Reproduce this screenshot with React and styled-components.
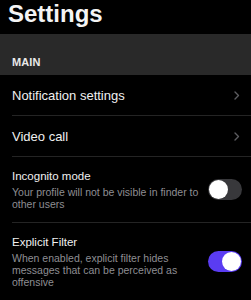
import React from 'react';
import styled, { createGlobalStyle } from 'styled-components';

const GlobalStyle = createGlobalStyle`
  html, body {
    margin: 0;
    padding: 0;
    background: #000;
  }
  body {
    font-family: 'Liberation Sans', Arial, sans-serif;
    color: #fff;
    -webkit-font-smoothing: antialiased;
  }
`;

const Screen = styled.div`
  width: 251px;
  height: 300px;
  overflow: hidden;
  background: #000;
`;

const Header = styled.h1`
  margin: 0;
  height: 34px;
  box-sizing: border-box;
  padding: 0 0 6px 8px;
  display: flex;
  align-items: flex-end;
  font-size: 24px;
  line-height: 28px;
  font-weight: 700;
  color: #f4f4f4;
`;

const Section = styled.div`
  height: 41px;
  box-sizing: border-box;
  background: #292929;
  padding: 22px 12px 0;
  font-size: 11px;
  line-height: 13px;
  font-weight: 700;
  color: #e8e8e8;
  letter-spacing: 0.1px;
`;

const List = styled.div`
  display: flex;
  flex-direction: column;
  padding-left: 12px;
`;

const NavRow = styled.div`
  height: 41px;
  box-sizing: border-box;
  padding: 1px 11px 0 0;
  display: flex;
  align-items: center;
  justify-content: space-between;
  border-bottom: 1px solid #242424;
  font-size: 13px;
  color: #f0f0f0;
`;

const ToggleRow = styled.div`
  box-sizing: border-box;
  padding: 12px 9px 12px 0;
  display: flex;
  align-items: center;
  justify-content: space-between;
  border-bottom: ${(p) => (p.$last ? 'none' : '1px solid #242424')};
`;

const TextCol = styled.div`
  width: 192px;
  display: flex;
  flex-direction: column;
`;

const Title = styled.div`
  font-size: 11.5px;
  line-height: 14px;
  color: #f0f0f0;
`;

const Sub = styled.div`
  margin-top: 4px;
  font-size: 10.5px;
  line-height: 11.7px;
  color: #8e8e93;
`;

const Track = styled.div`
  width: 34px;
  height: 21px;
  border-radius: 11px;
  box-sizing: border-box;
  padding: 1px;
  display: flex;
  justify-content: ${(p) => (p.$on ? 'flex-end' : 'flex-start')};
  background: ${(p) => (p.$on ? '#5a3cf2' : '#38383b')};
  flex-shrink: 0;
`;

const Knob = styled.div`
  width: 19px;
  height: 19px;
  border-radius: 50%;
  background: #fff;
`;

const Chevron = () => (
  <svg width="6" height="9" viewBox="0 0 6 9">
    <polyline points="1,1 4.5,4.5 1,8" fill="none" stroke="#5c5c60" strokeWidth="1.4" strokeLinecap="round" strokeLinejoin="round" />
  </svg>
);

const Toggle = ({ on }) => (
  <Track $on={on}>
    <Knob />
  </Track>
);

export default function App() {
  return (
    <Screen>
      <GlobalStyle />
      <Header>Settings</Header>
      <Section>MAIN</Section>
      <List>
        <NavRow>
          Notification settings
          <Chevron />
        </NavRow>
        <NavRow>
          Video call
          <Chevron />
        </NavRow>
        <ToggleRow>
          <TextCol>
            <Title>Incognito mode</Title>
            <Sub>Your profile will not be visible in finder to other users</Sub>
          </TextCol>
          <Toggle on={false} />
        </ToggleRow>
        <ToggleRow $last>
          <TextCol>
            <Title>Explicit Filter</Title>
            <Sub>When enabled, explicit filter hides messages that can be perceived as offensive</Sub>
          </TextCol>
          <Toggle on />
        </ToggleRow>
      </List>
    </Screen>
  );
}
